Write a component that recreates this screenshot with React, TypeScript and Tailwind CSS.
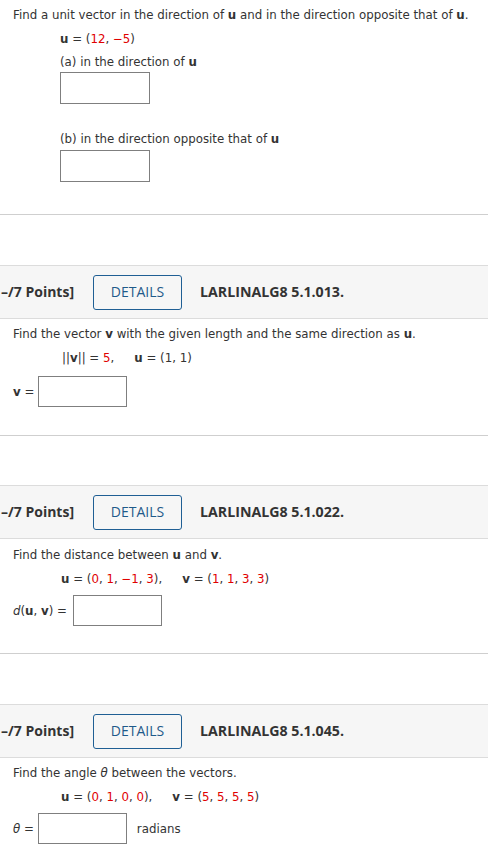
import React from "react";

const R = ({ children }: { children: React.ReactNode }) => (
  <span className="text-[#e00000]">{children}</span>
);
const B = ({ children }: { children: React.ReactNode }) => (
  <b className="font-bold">{children}</b>
);

const Input = ({ w = "w-[90px]", h = "h-[32px]" }: { w?: string; h?: string }) => (
  <div className={`${w} ${h} border border-[#7f7f7f] bg-white`} />
);

const Header = ({ code }: { code: string }) => (
  <div className="flex h-[54px] items-center border-y border-[#dcdcdc] bg-[#f6f6f6] font-['Open_Sans',sans-serif]">
    <span className="w-[93px] pl-[1px] text-[14px] font-bold text-[#333]">–/7 Points]</span>
    <div className="flex h-[35px] w-[89px] items-center justify-center rounded-[3px] border border-[#1f5f94] text-[14px] text-[#1f5a8a]">
      DETAILS
    </div>
    <span className="ml-[18px] text-[14.2px] font-bold text-[#333]">{code}</span>
  </div>
);

export default function App() {
  return (
    <div className="w-[488px] bg-white font-['DejaVu_Sans',sans-serif] text-[11.8px] leading-[16px] text-[#333]">
      {/* Section 1 */}
      <div className="pl-[13px] pt-[7px] pb-[32px]">
        <p>
          Find a unit vector in the direction of <B>u</B> and in the direction opposite that of <B>u</B>.
        </p>
        <div className="pl-[47px]">
          <p className="mt-[8px]">
            <B>u</B> = (<R>12</R>, <R>−5</R>)
          </p>
          <p className="mt-[7px]">
            (a) in the direction of <B>u</B>
          </p>
          <div className="mt-[2px]">
            <Input />
          </div>
          <p className="mt-[27px]">
            (b) in the direction opposite that of <B>u</B>
          </p>
          <div className="mt-[3px]">
            <Input />
          </div>
        </div>
      </div>
      <div className="h-px bg-[#cfcfcf]" />
      <div className="h-[50px]" />

      {/* Section 2 */}
      <Header code="LARLINALG8 5.1.013." />
      <div className="pl-[13px] pt-[7px] pb-[28px]">
        <p>
          Find the vector <B>v</B> with the given length and the same direction as <B>u</B>.
        </p>
        <p className="mt-[8px] pl-[49px]">
          ||<B>v</B>|| = <R>5</R>,<span className="inline-block w-[20px]" />
          <B>u</B> = (1, 1)
        </p>
        <div className="mt-[10px] flex items-center gap-[4px]">
          <span>
            <B>v</B> =
          </span>
          <Input w="w-[89px]" h="h-[31px]" />
        </div>
      </div>
      <div className="h-px bg-[#cfcfcf]" />
      <div className="h-[49px]" />

      {/* Section 3 */}
      <Header code="LARLINALG8 5.1.022." />
      <div className="pl-[13px] pt-[8px] pb-[27px]">
        <p>
          Find the distance between <B>u</B> and <B>v</B>.
        </p>
        <p className="mt-[8px] pl-[48px]">
          <B>u</B> = (<R>0</R>, <R>1</R>, <R>−1</R>, <R>3</R>),<span className="inline-block w-[20px]" />
          <B>v</B> = (<R>1</R>, <R>1</R>, <R>3</R>, <R>3</R>)
        </p>
        <div className="mt-[8px] flex items-center gap-[6px]">
          <span>
            <i className="italic">d</i>(<B>u</B>, <B>v</B>) =
          </span>
          <Input w="w-[89px]" h="h-[31px]" />
        </div>
      </div>
      <div className="h-px bg-[#cfcfcf]" />
      <div className="h-[50px]" />

      {/* Section 4 */}
      <Header code="LARLINALG8 5.1.045." />
      <div className="pl-[13px] pt-[7px] pb-[20px]">
        <p>
          Find the angle <i className="italic">θ</i> between the vectors.
        </p>
        <p className="mt-[8px] pl-[48px]">
          <B>u</B> = (<R>0</R>, <R>1</R>, <R>0</R>, <R>0</R>),<span className="inline-block w-[20px]" />
          <B>v</B> = (<R>5</R>, <R>5</R>, <R>5</R>, <R>5</R>)
        </p>
        <div className="mt-[8px] flex items-center gap-[4px]">
          <span>
            <i className="italic">θ</i> =
          </span>
          <Input w="w-[89px]" h="h-[31px]" />
          <span className="ml-[6px]">radians</span>
        </div>
      </div>
    </div>
  );
}
